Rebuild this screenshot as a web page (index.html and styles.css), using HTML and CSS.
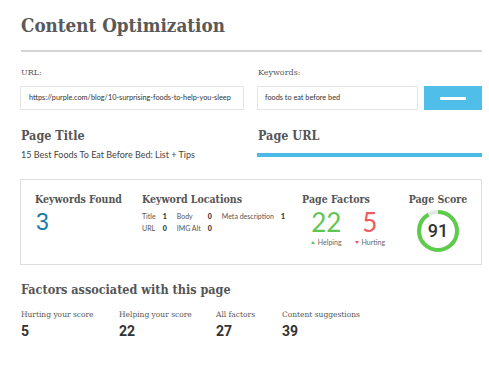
FILE: index.html
```html
<!DOCTYPE html>
<html>
<head>
<meta charset="utf-8">
<link rel="stylesheet" href="styles.css">
</head>
<body>
<div class="page">
  <h1 class="title">Content Optimization</h1>
  <div class="rule"></div>

  <div class="form">
    <div class="field url-field">
      <label class="label">URL:</label>
      <div class="input">https://purple.com/blog/10-surprising-foods-to-help-you-sleep</div>
    </div>
    <div class="field kw-field">
      <label class="label">Keywords:</label>
      <div class="kw-row">
        <div class="input kw-input">foods to eat before bed</div>
        <div class="btn"><span class="btn-bar"></span></div>
      </div>
    </div>
  </div>

  <div class="meta">
    <div class="meta-col">
      <h2 class="h2">Page Title</h2>
      <div class="meta-text">15 Best Foods To Eat Before Bed: List + Tips</div>
    </div>
    <div class="meta-col right">
      <h2 class="h2">Page URL</h2>
      <div class="url-bar"></div>
    </div>
  </div>

  <div class="box">
    <div class="cell kf">
      <div class="h3">Keywords Found</div>
      <div class="kf-num">3</div>
    </div>
    <div class="cell kl">
      <div class="h3">Keyword Locations</div>
      <div class="loc">
        <span>Title</span><b>1</b><span>Body</span><b>0</b><span>Meta description</span><b>1</b>
        <span>URL</span><b>0</b><span>IMG Alt</span><b>0</b>
      </div>
    </div>
    <div class="cell pf">
      <div class="h3">Page Factors</div>
      <div class="pf-row">
        <div class="pf-item">
          <div class="pf-num green">22</div>
          <div class="pf-lbl"><span class="tri up"></span>Helping</div>
        </div>
        <div class="pf-item">
          <div class="pf-num red">5</div>
          <div class="pf-lbl"><span class="tri down"></span>Hurting</div>
        </div>
      </div>
    </div>
    <div class="cell ps">
      <div class="h3">Page Score</div>
      <div class="gauge">
        <svg width="44" height="44" viewBox="0 0 44 44">
          <circle cx="22" cy="22" r="19" fill="none" stroke="#e6e6e6" stroke-width="4"/>
          <circle cx="22" cy="22" r="19" fill="none" stroke="#5dcb4b" stroke-width="4"
            stroke-dasharray="108.6 119.4" transform="rotate(-90 22 22)"/>
        </svg>
        <span class="gauge-num">91</span>
      </div>
    </div>
  </div>

  <h2 class="h2 factors-title">Factors associated with this page</h2>
  <div class="stats">
    <div class="stat s1"><div class="stat-lbl">Hurting your score</div><div class="stat-num">5</div></div>
    <div class="stat s2"><div class="stat-lbl">Helping your score</div><div class="stat-num">22</div></div>
    <div class="stat s3"><div class="stat-lbl">All factors</div><div class="stat-num">27</div></div>
    <div class="stat s4"><div class="stat-lbl">Content suggestions</div><div class="stat-num">39</div></div>
  </div>
</div>
</body>
</html>
```

FILE: styles.css
```css
* { box-sizing: border-box; }
html, body { margin: 0; padding: 0; background: #fff; }
body { font-family: Lato, "Noto Sans", sans-serif; color: #444; }

.page { padding: 10px 7px 0 20px; width: 489px; }

.title {
  margin: 0 0 0 1px;
  font-family: "DejaVu Serif", serif;
  font-stretch: condensed;
  font-weight: bold;
  font-size: 18.7px;
  line-height: 30px;
  color: #595959;
}
.rule { height: 2px; background: #d4d4d4; margin-top: 10px; margin-left: 1px; }

.form { display: flex; gap: 13px; margin-top: 16px; }
.url-field { width: 224px; }
.kw-field { flex: 1; }
.label {
  display: block;
  font-family: "DejaVu Serif", serif;
  font-size: 8px;
  color: #555;
  line-height: 10px;
  margin-left: 1px;
}
.input {
  margin-top: 8px;
  height: 24px;
  border: 1px solid #e4e4e4;
  font-size: 7.3px;
  line-height: 22px;
  padding-left: 8px;
  color: #333;
  white-space: nowrap;
  overflow: hidden;
}
.kw-row { display: flex; gap: 6px; }
.kw-input { width: 161px; padding-left: 7px; }
.btn {
  margin-top: 8px;
  flex: 1;
  height: 24px;
  background: #4fbee9;
  display: flex;
  align-items: center;
  justify-content: center;
}
.btn-bar { width: 26px; height: 3px; background: #fff; border-radius: 1px; }

.meta { display: flex; gap: 13px; margin-top: 18px; }
.meta-col { width: 224px; }
.meta-col.right { flex: 1; }
.h2 {
  margin: 0 0 0 1px;
  font-family: "DejaVu Serif", serif;
  font-stretch: condensed;
  font-weight: bold;
  font-size: 12.5px;
  line-height: 16px;
  color: #555;
}
.meta-text { font-size: 9px; color: #444; margin-top: 5px; margin-left: 1px; }
.url-bar { height: 4px; background: #4db9e6; margin-top: 9px; }

.box {
  margin-top: 19px;
  height: 86px;
  border: 1px solid #dedede;
  display: flex;
  padding: 12px 0 0 14px;
}
.h3 {
  font-family: "DejaVu Serif", serif;
  font-stretch: condensed;
  font-weight: bold;
  font-size: 10.5px;
  line-height: 14px;
  color: #555;
  white-space: nowrap;
}
.kf { width: 107px; }
.kf-num { color: #1a7ca6; font-size: 23px; font-family: "Liberation Sans", sans-serif; line-height: 26px; margin-top: 3px; margin-left: 1px; }
.kl { width: 150px; }
.loc {
  display: grid;
  grid-template-columns: auto auto auto auto auto auto;
  justify-content: start;
  column-gap: 7px;
  row-gap: 1px;
  font-size: 7px;
  line-height: 11px;
  color: #555;
  margin-top: 5px;
}
.loc b { color: #333; font-weight: 900; margin-right: 3px; }
.pf { width: 90px; text-align: center; }
.pf .h3 { margin-left: -2px; }
.pf-row { display: flex; justify-content: center; gap: 13px; margin-top: 3px; padding-left: 22px; }
.pf-item { display: flex; flex-direction: column; align-items: center; }
.pf-num { font-size: 26px; line-height: 27px; font-family: Lato, sans-serif; }
.green { color: #5fc652; }
.red { color: #ee5a60; }
.pf-lbl { font-size: 7px; color: #666; margin-top: 2px; display: flex; align-items: center; gap: 3px; white-space: nowrap; }
.tri { width: 0; height: 0; border-left: 2.5px solid transparent; border-right: 2.5px solid transparent; }
.tri.up { border-bottom: 3px solid #5fc652; }
.tri.down { border-top: 3px solid #ee5a60; }
.ps { width: 66px; margin-left: 23px; display: flex; flex-direction: column; align-items: center; }
.gauge { position: relative; width: 44px; height: 44px; margin-top: 3px; }
.gauge svg { display: block; }
.gauge-num {
  position: absolute; left: 0; top: 0; width: 44px; line-height: 44px; text-align: center;
  font-family: Roboto, sans-serif; font-size: 18px; color: #333; font-weight: 500;
}

.factors-title { margin-top: 17px; font-size: 12.5px; }
.stats { display: flex; margin-top: 12px; }
.stat { margin-left: 1px; }
.s1 { width: 97px; }
.s2 { width: 96px; }
.s3 { width: 65px; }
.stat-lbl { font-family: "DejaVu Serif", serif; font-size: 7.5px; color: #555; line-height: 10px; }
.stat-num { font-family: Roboto, sans-serif; font-weight: bold; font-size: 14px; color: #333; line-height: 18px; margin-top: 2px; }
```
